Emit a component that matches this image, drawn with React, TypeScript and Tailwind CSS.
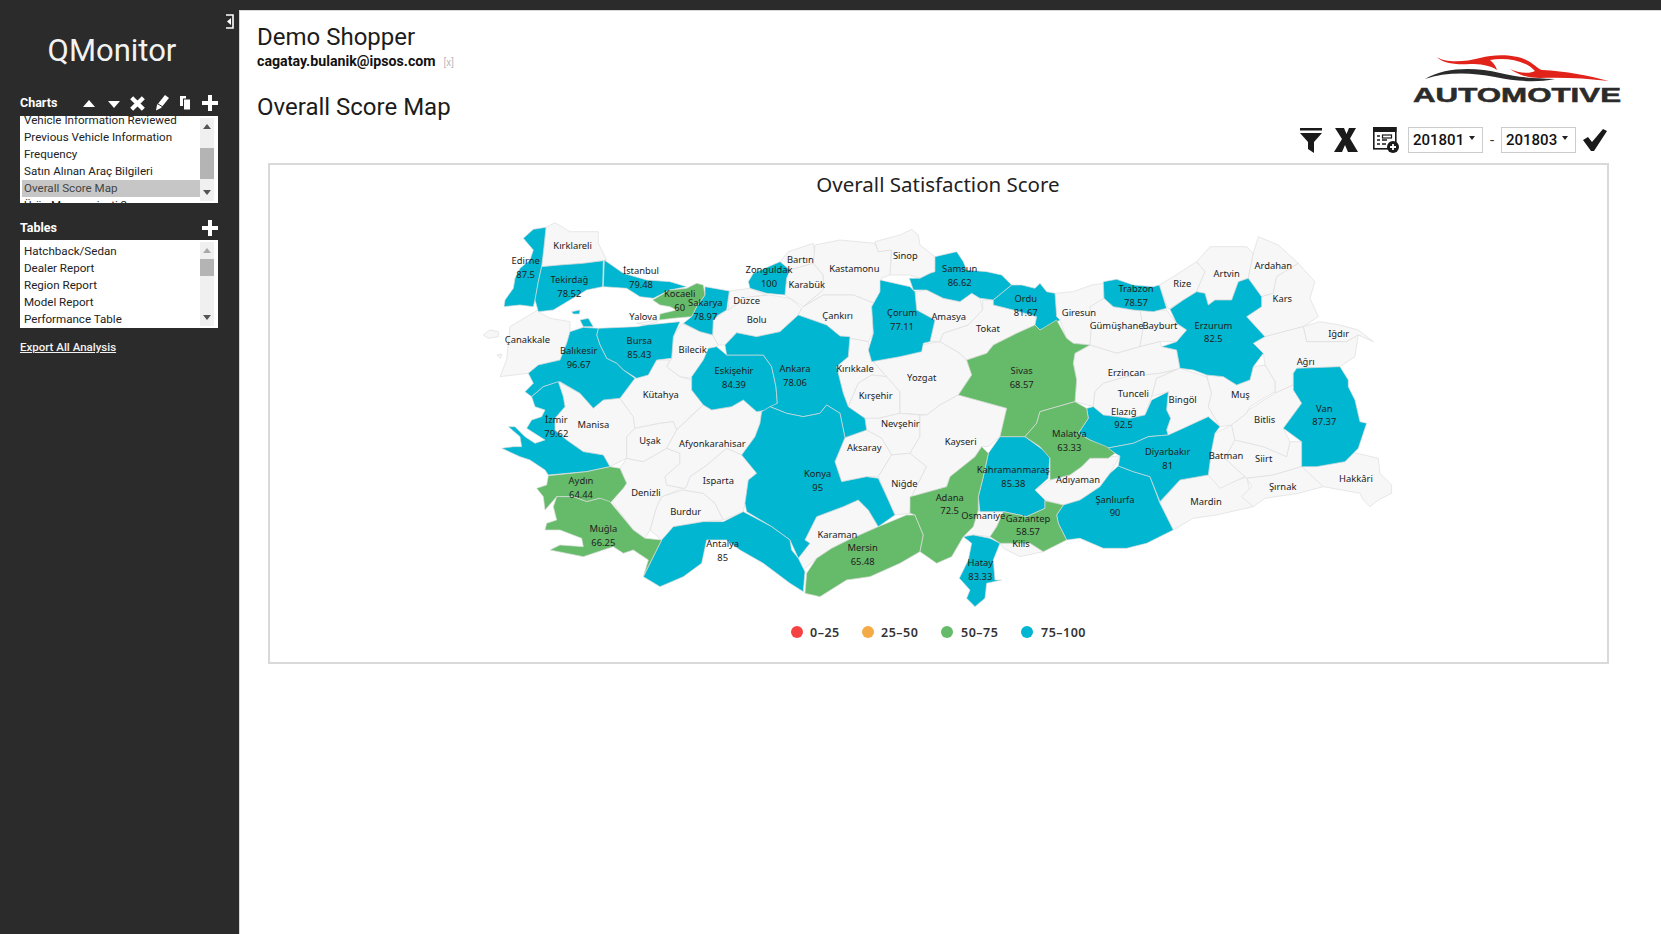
import React from "react";

const B = "#00b6d0";
const G = "#66bb6a";
const W = "#f7f7f7";

// province shapes, in the coordinates of two overlapping map sheets
const west: [string, string][] = [
  [W, "228,52 255,38 300,65 385,65 385,100 410,150 340,160 270,165 215,170 222,110"],
  [W, "120,350 195,305 225,285 205,305 240,325 300,335 300,365 290,400 270,450 205,465 175,490 90,500 110,450 115,400"],
  [W, "40,375 60,360 85,365 85,380 55,385"],
  [W, "80,435 95,432 92,445"],
  [W, "500,340 565,330 560,338 530,345"],
  [W, "265,515 330,550 370,595 400,570 450,565 490,620 495,655 470,680 470,745 420,770 400,735 340,725 290,690 255,660 255,625 285,590 280,560"],
  [W, "450,565 495,505 535,495 560,450 600,450 590,470 630,500 665,510 665,540 700,585 660,620 620,660 610,635 570,640 520,650 495,655 490,620"],
  [W, "635,340 690,365 728,375 745,405 700,450 665,505 630,500 590,470 605,445 610,380"],
  [W, "775,300 830,260 900,255 960,265 995,295 985,315 930,365 860,380 800,368 765,405 745,405 728,375 730,330 770,300"],
  [W, "778,243 840,235 890,255 830,262 775,300"],
  [W, "930,155 955,125 1030,100 1035,130 1030,160 960,180"],
  [W, "960,180 1030,160 1060,195 1060,240 1000,290 960,265 945,255 950,205"],
  [W, "1035,105 1110,90 1215,100 1225,125 1265,120 1260,195 1235,205 1230,240 1225,285 1150,255 1060,255 1000,290 1060,240 1060,195 1030,160"],
  [W, "1000,290 1060,255 1150,255 1225,285 1205,290 1210,370 1195,395 1140,385 1110,378 1070,345 985,315 995,295"],
  [W, "1140,385 1195,395 1210,455 1250,500 1205,495 1165,520 1135,590 1120,550 1100,470 1135,440"],
  [W, "1135,590 1165,520 1205,495 1250,500 1290,545 1290,610 1225,625 1185,625"],
  [W, "1210,455 1290,420 1350,405 1410,395 1470,430 1490,450 1505,495 1465,555 1410,585 1370,615 1290,610 1290,545 1250,500"],
  [W, "1225,625 1290,610 1350,615 1350,680 1320,730 1265,735 1235,685 1190,660 1185,625"],
  [W, "1125,683 1190,660 1235,685 1265,735 1225,800 1190,800 1115,815 1095,755"],
  [W, "1265,735 1320,730 1370,770 1325,860 1320,910 1275,915 1255,870 1225,800"],
  [W, "1350,615 1370,615 1410,585 1465,555 1610,595 1590,680 1555,710 1535,710 1515,740 1440,800 1430,830 1340,855 1320,910 1325,860 1370,770 1320,730 1350,680"],
  [W, "1005,990 1040,920 1120,890 1165,870 1195,900 1225,950 1135,990 1085,1015 1040,1045 1000,1080 985,1045 1020,1000"],
  [W, "575,860 640,840 700,850 735,880 760,930 700,935 610,950 575,990 540,960 560,890"],
  [W, "420,860 460,835 470,820 450,775 470,745 520,755 590,715 630,730 630,760 585,800 590,825 640,835 575,860 560,890 540,960 525,985 490,960 430,880"],
  [W, "470,680 495,655 570,640 610,635 620,660 590,715 520,755 470,745"],
  [W, "620,660 700,585 725,600 785,590 820,570 860,605 875,605 870,640 855,680 815,735 770,715 705,770 660,800 650,830 640,835 590,825 585,800 630,760 630,730 590,715"],
  [W, "650,830 660,800 705,770 770,715 815,735 860,790 835,810 825,880 820,905 760,930 735,880 700,850 640,840"],
  [B, "190,58 228,52 222,110 215,170 205,215 197,262 190,290 150,285 102,290 105,270 130,235 135,205 150,175 180,150 190,120 160,85"],
  [B, "215,170 270,165 340,160 400,152 398,230 350,240 300,270 250,300 205,305 195,270 205,215"],
  [B, "403,150 460,190 530,210 600,215 650,230 600,240 550,265 510,260 470,235 400,230"],
  [B, "705,230 778,243 770,300 745,315 730,330 728,375 690,365 640,340 665,320 680,290 705,255"],
  [B, "385,355 500,350 530,345 630,335 610,380 605,445 560,450 535,495 500,505 460,480 440,460 410,445 390,405 380,375"],
  [B, "300,365 340,352 385,355 380,375 390,405 410,445 440,460 460,480 495,505 450,565 400,570 370,595 330,550 270,515 220,530 185,560 165,545 190,520 175,490 205,465 270,450 290,400"],
  [B, "305,305 330,300 328,312 310,312"],
  [B, "330,330 355,325 370,350 340,350"],
  [B, "185,560 220,530 265,515 280,560 285,590 255,625 255,660 290,690 340,725 400,735 420,770 350,785 235,795 225,780 180,750 150,740 95,715 130,710 155,710 150,680 115,650 135,650 165,680 195,700 225,690 170,655 185,630 215,620 225,600 195,590"],
  [B, "715,415 740,410 770,435 880,435 905,470 918,530 922,580 895,600 860,605 820,570 785,590 725,600 700,585 665,540 665,500 700,450"],
  [B, "800,368 860,380 930,365 985,315 1070,345 1110,378 1140,380 1135,440 1100,470 1120,550 1135,590 1185,625 1190,660 1125,683 1110,610 1070,585 1050,610 1000,620 950,610 900,590 922,580 918,530 905,470 880,435 770,435 765,405"],
  [B, "850,190 930,155 960,180 950,205 945,255 890,250 840,235 835,215"],
  [B, "875,605 900,590 950,610 1000,620 1050,610 1070,585 1110,610 1125,683 1095,755 1115,815 1190,800 1225,805 1255,870 1275,915 1225,950 1195,900 1165,870 1120,890 1040,920 1005,990 1020,1000 985,1045 960,990 905,950 830,905 825,880 835,810 860,790 815,735 855,680 870,640"],
  [B, "610,950 700,935 760,935 820,905 905,950 960,990 965,1020 985,1045 1005,1085 1000,1145 960,1120 880,1060 810,1020 770,990 710,990 695,1060 640,1100 570,1130 520,1100 555,1030 575,990"],
  [G, "548,270 600,240 650,235 680,220 700,225 705,255 680,290 665,320 610,325 568,330 570,312 620,300 600,290 570,285"],
  [G, "235,797 350,785 420,770 450,775 470,820 460,835 420,880 390,865 350,875 310,860 260,860 225,900 220,860 200,835 230,825"],
  [G, "260,860 310,860 350,875 390,865 420,875 490,960 525,985 575,990 555,1030 520,1100 535,1050 490,1020 460,1030 430,1010 400,1020 340,1040 240,1020 270,1005 340,1010 335,985 270,960 225,960 230,940 260,930 250,890"],
  [G, "1225,950 1310,915 1335,915 1360,975 1350,1025 1290,1060 1200,1100 1130,1110 1050,1160 1005,1150 1010,1090 1040,1045 1085,1015 1135,990"],
];

const east: [string, string][] = [
  [W, "-75,95 0,75 35,58 55,75 60,105 105,140 105,185 90,190 60,205 30,195 -30,195 -25,120 -65,125"],
  [W, "45,245 80,240 130,265 180,275 215,250 240,265 248,300 205,345 130,370 120,395 90,395 105,330 50,300"],
  [W, "248,270 280,270 280,285 340,300 410,320 405,345 350,370 300,395 280,405 260,430 200,450 180,430 120,395 130,370 205,345 248,300"],
  [W, "465,250 520,245 575,225 610,220 612,265 575,290 575,345 570,405 520,400 500,385 480,330 470,320"],
  [W, "612,265 640,290 700,300 720,300 730,350 720,410 650,430 570,405 575,340 570,290"],
  [W, "720,300 800,300 830,340 860,360 830,395 780,395 720,410 730,350"],
  [W, "778,225 820,200 890,155 915,185 890,245 850,270 805,298"],
  [W, "890,155 930,110 1040,110 1060,130 1045,205 1015,215 995,270 945,270 925,285 915,250 890,245 915,185"],
  [W, "1060,130 1075,80 1135,105 1195,160 1130,200 1120,250 1085,260 1045,205"],
  [W, "1195,160 1245,215 1230,265 1255,320 1210,350 1095,380 1040,320 1085,290 1085,260 1120,250 1130,200"],
  [W, "1210,350 1260,335 1320,345 1375,360 1420,395 1375,375 1340,395 1220,395"],
  [W, "570,405 650,430 720,410 780,395 785,410 830,420 840,475 780,490 680,500 610,520 585,545 580,590 525,575 530,510 520,460 525,430"],
  [W, "585,545 610,520 680,500 780,490 830,480 770,505 755,560 735,615 690,625 610,615 580,590"],
  [W, "770,505 840,475 920,500 935,550 925,590 960,650 925,620 860,650 815,675 800,660 812,625 800,600 805,545 755,560"],
  [W, "450,810 510,795 545,770 570,745 660,738 630,790 600,830 540,870 490,885 435,870 405,840"],
  [W, "300,1000 390,1000 430,1025 360,1040 310,1015"],
  [W, "235,860 240,905 310,905 290,950 270,980 220,975 190,980 220,950 235,900"],
  [W, "780,880 840,810 925,795 960,830 1040,800 1060,890 950,915 880,925 820,960"],
  [W, "945,670 995,645 1005,690 975,745 1035,800 960,835 925,795 935,720"],
  [W, "1005,690 1090,710 1160,740 1170,695 1205,695 1205,770 1120,795 1040,805 975,745"],
  [W, "1040,805 1120,795 1205,770 1260,765 1270,830 1195,850 1095,865 1060,890 1025,860 1055,830"],
  [W, "1205,770 1265,765 1335,755 1350,725 1435,745 1440,790 1475,825 1475,850 1435,870 1410,890 1390,870 1380,850 1270,830"],
  [W, "1095,380 1210,350 1220,395 1340,395 1375,375 1365,440 1320,470 1190,475 1180,490 1180,525 1125,550 1125,515 1095,465 1090,430 1060,400"],
  [W, "920,495 970,500 1010,525 1050,510 1060,470 1095,465 1125,515 1125,545 1050,590 1040,610 995,645 960,650 925,590 935,550"],
  [W, "1045,600 1125,550 1180,525 1205,580 1150,655 1170,695 1160,740 1090,710 1005,690 995,645 1040,610"],
  [B, "-60,210 30,230 45,245 50,300 105,330 90,395 70,400 65,425 0,440 -85,455 -95,420 -80,370 -85,290 -60,245"],
  [B, "105,140 170,125 190,155 200,180 260,185 305,195 335,225 280,270 240,265 215,250 180,275 130,265 80,240 40,240 28,205 60,205 90,190 105,185"],
  [B, "335,225 365,225 405,235 420,220 440,245 465,250 470,320 480,330 440,355 420,360 405,345 410,320 340,300 280,285 280,270"],
  [B, "610,215 650,208 700,225 760,230 778,225 800,295 760,305 700,300 640,290 612,265"],
  [B, "810,298 850,270 890,245 915,250 925,285 945,270 995,270 1015,215 1045,205 1085,260 1085,290 1040,320 1095,380 1060,400 1090,430 1060,470 1050,510 1010,525 970,500 920,495 880,480 840,475 830,420 785,410 830,395 860,360 830,340"],
  [B, "560,595 580,590 610,615 690,625 735,615 755,570 805,545 800,600 812,625 800,660 805,675 745,680 700,700 620,715 570,690 535,670 565,625"],
  [B, "300,680 375,680 450,735 445,805 405,840 435,870 435,895 380,920 310,905 240,905 235,860 250,800 265,730"],
  [B, "190,980 220,975 270,985 300,1000 280,1050 285,1110 305,1110 260,1120 255,1165 225,1190 200,1165 210,1140 178,1105 205,1050 215,1000"],
  [B, "490,885 540,870 600,830 630,790 655,768 700,785 750,800 780,880 820,960 740,1000 680,1015 610,1015 540,985 500,990 475,940 470,915"],
  [B, "620,715 700,700 745,680 805,675 860,650 925,620 960,650 945,670 935,720 925,795 840,810 780,875 750,800 700,785 655,768 660,738 645,730"],
  [B, "1190,475 1320,470 1345,510 1345,530 1365,570 1380,635 1400,640 1375,715 1335,755 1250,770 1205,770 1205,695 1150,655 1205,580 1180,540 1180,490"],
  [G, "405,345 420,360 470,330 500,385 520,400 570,405 525,430 520,460 530,510 525,575 420,605 410,640 375,680 300,680 320,595 175,555 215,495 200,450 260,430 280,405 350,370"],
  [G, "525,575 560,595 565,625 535,670 570,690 620,710 645,730 625,745 570,745 545,770 510,795 450,810 450,745 420,710 375,680 410,640 420,605"],
  [G, "310,905 380,920 435,895 435,872 490,885 470,915 475,940 500,990 430,1025 390,1000 300,1000 270,980 290,950"],
  [G, "30,860 50,855 140,830 150,800 225,740 245,710 265,730 250,800 235,860 235,900 220,950 190,980 155,1040 110,1060 60,1025 70,975 45,915 30,910"],
];

// [name, value, x, y] in sheet coordinates
const westLabels: [string, string, number, number][] = [
  ["Kırklareli", "", 308, 118], ["Edirne", "87.5", 167, 163], ["Tekirdağ", "78.52", 298, 220],
  ["İstanbul", "79.48", 513, 193], ["Kocaeli", "60", 629, 261], ["Sakarya", "78.97", 706, 288],
  ["Yalova", "", 520, 331], ["Düzce", "", 830, 282], ["Bolu", "", 860, 338],
  ["Zonguldak", "100", 897, 190], ["Bartın", "", 991, 160], ["Karabük", "", 1010, 234],
  ["Kastamonu", "", 1153, 187], ["Sinop", "", 1306, 148], ["Çankırı", "", 1103, 326],
  ["Çorum", "77.11", 1296, 318], ["Çanakkale", "", 172, 400], ["Balıkesir", "96.67", 326, 433],
  ["Bursa", "85.43", 508, 403], ["Bilecik", "", 668, 430], ["Eskişehir", "84.39", 792, 493],
  ["Ankara", "78.06", 975, 487], ["Kırıkkale", "", 1155, 487], ["Kırşehir", "", 1217, 566],
  ["Yozgat", "", 1355, 513], ["Kütahya", "", 572, 563], ["Nevşehir", "", 1291, 650],
  ["Manisa", "", 370, 655], ["İzmir", "79.62", 259, 640], ["Uşak", "", 540, 702],
  ["Afyonkarahisar", "", 727, 712], ["Aksaray", "", 1183, 724], ["Konya", "95", 1043, 801],
  ["Niğde", "", 1303, 830], ["Aydın", "64.44", 333, 822], ["Isparta", "", 745, 822],
  ["Denizli", "", 528, 859], ["Burdur", "", 647, 916], ["Muğla", "66.25", 400, 967],
  ["Karaman", "", 1102, 985], ["Antalya", "85", 758, 1011], ["Mersin", "65.48", 1178, 1023],
];

const eastLabels: [string, string, number, number][] = [
  ["Samsun", "86.62", 179, 187], ["Amasya", "", 146, 330], ["Tokat", "", 264, 365],
  ["Ordu", "81.67", 377, 276], ["Giresun", "", 537, 318], ["Trabzon", "78.57", 708, 247],
  ["Rize", "", 847, 232], ["Artvin", "", 980, 202], ["Ardahan", "", 1120, 178],
  ["Kars", "", 1147, 276], ["Gümüşhane", "", 650, 356], ["Bayburt", "", 780, 356],
  ["Erzurum", "82.5", 940, 356], ["Iğdır", "", 1316, 380], ["Ağrı", "", 1217, 464],
  ["Sivas", "68.57", 365, 493], ["Erzincan", "", 679, 499], ["Tunceli", "", 700, 560],
  ["Bingöl", "", 848, 579], ["Muş", "", 1021, 564], ["Elazığ", "92.5", 671, 614],
  ["Bitlis", "", 1094, 640], ["Van", "87.37", 1273, 605], ["Malatya", "63.33", 508, 682],
  ["Kayseri", "", 182, 706], ["Diyarbakır", "81", 803, 736], ["Batman", "", 978, 748],
  ["Siirt", "", 1091, 757], ["Kahramanmaraş", "85.38", 340, 790], ["Adıyaman", "", 534, 819],
  ["Hakkâri", "", 1368, 815], ["Şırnak", "", 1148, 839], ["Adana", "72.5", 149, 872],
  ["Şanlıurfa", "90", 645, 878], ["Mardin", "", 918, 884], ["Osmaniye", "", 250, 926],
  ["Gaziantep", "58.57", 384, 935], ["Kilis", "", 363, 1011], ["Hatay", "83.33", 241, 1068],
];

const legend: [string, string, number, number][] = [
  ["#f54343", "0–25", 797, 810],
  ["#f4ab45", "25–50", 868, 881],
  ["#66bb6a", "50–75", 947, 961],
  ["#00b6d0", "75–100", 1027, 1041],
];

function Labels({ items, ox }: { items: [string, string, number, number][]; ox: number }) {
  return (
    <>
      {items.map(([name, value, x, y]) => (
        <text key={name} x={ox + x / 3} y={210 + y / 3} textAnchor="middle" fontSize="9.4" fill="#222">
          <tspan>{name}</tspan>
          {value ? (
            <tspan x={ox + x / 3} dy="13.7">
              {value}
            </tspan>
          ) : null}
        </text>
      ))}
    </>
  );
}

function TurkeyMap() {
  return (
    <svg viewBox="270 165 1337 497" className="w-full h-full block" style={{ fontFamily: '"Noto Sans", sans-serif' }}>
      <text x="938" y="191.5" textAnchor="middle" fontSize="20.5" fill="#222">
        Overall Satisfaction Score
      </text>
      <g transform="translate(470 210) scale(0.3333)" stroke="#dcdcdc" strokeWidth="2" strokeLinejoin="round">
        {west.map(([f, p], i) => (
          <polygon key={i} points={p} fill={f} />
        ))}
      </g>
      <g transform="translate(900 210) scale(0.3333)" stroke="#dcdcdc" strokeWidth="2" strokeLinejoin="round">
        {east.map(([f, p], i) => (
          <polygon key={i} points={p} fill={f} />
        ))}
      </g>
      <Labels items={westLabels} ox={470} />
      <Labels items={eastLabels} ox={900} />
      {legend.map(([c, t, cx, tx]) => (
        <g key={t}>
          <circle cx={cx} cy="632" r="6" fill={c} />
          <text x={tx} y="636.5" fontSize="12.5" fontWeight="600" fill="#333" letterSpacing="0.5">
            {t}
          </text>
        </g>
      ))}
    </svg>
  );
}

function Logo() {
  return (
    <svg viewBox="1405 48 222 60" className="w-[222px] h-[60px] block">
      <path
        d="M1437 57 C1445 63 1465 62 1480 58 C1498 53 1520 55 1530 62 C1535 65 1538 69 1542 70 C1565 71 1590 76 1609 81 C1585 78 1560 77 1540 78 C1530 78 1520 76 1510 69 C1518 73 1530 74 1535 71 C1525 60 1505 57 1490 60 C1494 63 1496 67 1497 70 C1490 65 1480 64 1470 64 C1455 65 1442 63 1437 57 Z"
        fill="#e2231a"
      />
      <path
        d="M1425 79 C1445 67 1475 67 1500 73 C1520 78 1535 78 1555 79 C1535 83 1515 81 1495 77 C1470 72 1445 72 1425 79 Z"
        fill="#2b2b2b"
      />
      <text
        x="1413"
        y="102"
        fontSize="20"
        fontWeight="700"
        fill="#2b2b2b"
        stroke="#2b2b2b"
        strokeWidth="0.5"
        textLength="208"
        lengthAdjust="spacingAndGlyphs"
        style={{ fontFamily: '"Liberation Sans", sans-serif' }}
      >
        AUTOMOTIVE
      </text>
    </svg>
  );
}

function Scrollbar({ thumbTop, thumbH, upDim }: { thumbTop: string; thumbH: string; upDim?: boolean }) {
  return (
    <div className="w-[14px] my-[2px] mr-[4px] bg-[#f0f0f0] flex flex-col items-center relative shrink-0">
      <svg viewBox="0 0 8 5" className="w-[8px] h-[5px] mt-[6px]">
        <polygon points="4,0 8,5 0,5" fill={upDim ? "#a8a8a8" : "#555"} />
      </svg>
      <div className={`absolute left-0 right-0 bg-[#b4b4b4] ${thumbTop} ${thumbH}`} />
      <svg viewBox="0 0 8 5" className="w-[8px] h-[5px] mt-auto mb-[6px]">
        <polygon points="0,0 8,0 4,5" fill="#555" />
      </svg>
    </div>
  );
}

function Row({ label, selected }: { label: string; selected?: boolean }) {
  return (
    <div className={`h-[17px] leading-[17px] pl-[2px] whitespace-nowrap ${selected ? "bg-[#c6c6c6] text-[#444]" : "text-[#222]"}`}>
      {label}
    </div>
  );
}

function Sidebar() {
  const rowText = "flex-1 text-[11.6px] pl-[2px] overflow-hidden";
  return (
    <aside className="w-[239px] shrink-0 bg-[#2b2b2b] text-white pl-[20px] pr-[21px] flex flex-col">
      <div className="flex justify-end -mr-[16px] pt-[4px] h-[19px]">
        <svg viewBox="0 0 8 15" className="w-[8px] h-[15px]">
          <path d="M0 1 H7 V14 H0" fill="none" stroke="#fff" strokeWidth="1.6" />
          <polygon points="1,7.5 5,4 5,11" fill="#fff" />
        </svg>
      </div>
      <div className="text-[31px] leading-[40px] mt-[2px] text-center text-[#f2f2f2] pr-[14px] whitespace-nowrap">QMonitor</div>

      <div className="flex items-center justify-between h-[20px] mt-[22px]">
        <span className="text-[12.5px] font-bold">Charts</span>
        <div className="flex items-center">
          <svg viewBox="0 0 12 7" className="w-[12px] h-[7px]">
            <polygon points="6,0 12,7 0,7" fill="#fff" />
          </svg>
          <svg viewBox="0 0 12 7" className="w-[12px] h-[7px] ml-[13px] mt-[3px]">
            <polygon points="0,0 12,0 6,7" fill="#fff" />
          </svg>
          <svg viewBox="0 0 16 16" className="w-[17px] h-[17px] ml-[9px]">
            <path d="M2.5 2.5 L13.5 13.5 M13.5 2.5 L2.5 13.5" stroke="#fff" strokeWidth="4" />
          </svg>
          <svg viewBox="0 0 14 16" className="w-[14px] h-[16px] ml-[9px]">
            <polygon points="10,0 14,3 6,13 1,15.5 2,10" fill="#fff" />
            <path d="M3 9 L8 12" stroke="#2b2b2b" strokeWidth="1" />
          </svg>
          <svg viewBox="0 0 11 14" className="w-[11px] h-[14px] ml-[11px]">
            <rect x="0" y="0" width="6" height="10" fill="#fff" />
            <rect x="3.5" y="3" width="7" height="11" fill="#fff" stroke="#2b2b2b" strokeWidth="1" />
          </svg>
          <svg viewBox="0 0 16 16" className="w-[16px] h-[16px] ml-[11px]">
            <path d="M8 0 V16 M0 8 H16" stroke="#fff" strokeWidth="4" />
          </svg>
        </div>
      </div>

      <div className="h-[87px] mt-[3px] bg-white flex overflow-hidden">
        <div className={rowText}>
          <div className="-mt-[4px]">
            <Row label="Vehicle Information Reviewed" />
            <Row label="Previous Vehicle Information" />
            <Row label="Frequency" />
            <Row label="Satın Alınan Araç Bilgileri" />
            <Row label="Overall Score Map" selected />
            <Row label="Ürün Memnuniyeti 2" />
          </div>
        </div>
        <Scrollbar thumbTop="top-[30px]" thumbH="h-[31px]" />
      </div>

      <div className="flex items-center justify-between h-[20px] mt-[15px]">
        <span className="text-[12.5px] font-bold">Tables</span>
        <svg viewBox="0 0 16 16" className="w-[16px] h-[16px]">
          <path d="M8 0 V16 M0 8 H16" stroke="#fff" strokeWidth="4" />
        </svg>
      </div>

      <div className="h-[88px] mt-[2px] bg-white flex overflow-hidden">
        <div className={rowText}>
          <div className="mt-[3px]">
            <Row label="Hatchback/Sedan" />
            <Row label="Dealer Report" />
            <Row label="Region Report" />
            <Row label="Model Report" />
            <Row label="Performance Table" />
          </div>
        </div>
        <Scrollbar thumbTop="top-[17px]" thumbH="h-[17px]" upDim />
      </div>

      <a className="text-[11.5px] font-medium underline mt-[11px] leading-[17px] text-[#f2f2f2]">Export All Analysis</a>
    </aside>
  );
}

function DateSelect({ value }: { value: string }) {
  return (
    <div className="w-[75px] h-[26px] border border-[#ccc] bg-white flex items-center pl-[4px]">
      <span className="text-[15px] font-medium text-[#111]">{value}</span>
      <svg viewBox="0 0 6 4" className="w-[6px] h-[4px] ml-auto mr-[7px] -mt-[5px]">
        <polygon points="0,0 6,0 3,4" fill="#222" />
      </svg>
    </div>
  );
}

function Toolbar() {
  return (
    <div className="flex items-center h-[26px] mr-[1px]">
      <svg viewBox="0 0 22 25" className="w-[22px] h-[25px]">
        <rect x="0" y="0" width="22" height="2.5" fill="#1a1a1a" />
        <polygon points="0,5 22,5 14,14 14,25 8,21 8,14" fill="#1a1a1a" />
      </svg>
      <svg viewBox="0 0 24 24" className="w-[24px] h-[24px] ml-[12px]">
        <polygon
          points="1,0 10,0 12.5,6 15,0 22,0 16,10.5 24,24 14,24 11,17 8,24 0,24 8,11"
          fill="#1a1a1a"
        />
      </svg>
      <svg viewBox="0 0 26 26" className="w-[26px] h-[26px] ml-[15px]">
        <rect x="0.8" y="0.8" width="22" height="21" fill="#fff" stroke="#1a1a1a" strokeWidth="1.6" />
        <rect x="0" y="0" width="23.5" height="5" fill="#1a1a1a" />
        <path d="M4 9 H7 M4 13 H7 M4 17 H7 M9 13 H14 M9 17 H13" stroke="#1a1a1a" strokeWidth="1.6" />
        <rect x="9.5" y="8" width="9" height="3" fill="none" stroke="#1a1a1a" strokeWidth="1.2" />
        <circle cx="20" cy="20" r="6" fill="#1a1a1a" />
        <path d="M20 17 V23 M17 20 H23" stroke="#fff" strokeWidth="1.8" />
      </svg>
      <div className="ml-[9px]">
        <DateSelect value="201801" />
      </div>
      <span className="w-[18px] text-center text-[15px] text-[#333]">-</span>
      <DateSelect value="201803" />
      <svg viewBox="0 0 24 22" className="w-[24px] h-[22px] ml-[7px]">
        <polygon points="0,11 5,8 9,13 20,0 24,2 11,22 8,22" fill="#1a1a1a" />
      </svg>
    </div>
  );
}

export default function App() {
  return (
    <div
      className="h-[934px] w-[1661px] overflow-hidden flex flex-col bg-white"
      style={{ fontFamily: 'Roboto, "Noto Sans", sans-serif' }}
    >
      <div className="h-[10px] shrink-0 bg-[#2b2b2b]" />
      <div className="flex flex-1 min-h-0">
        <Sidebar />
        <main className="flex-1 border-l border-t border-[#d8d8d8] pl-[17px] text-[#1c1c1c]">
          <div className="flex justify-between w-[1351px] h-[152px]">
            <div>
              <h1 className="text-[24px] leading-[32px] mt-[10px]">Demo Shopper</h1>
              <div className="flex items-baseline leading-[17px]">
                <span className="text-[14.2px] font-bold text-[#111]">cagatay.bulanik@ipsos.com</span>
                <span className="text-[10px] text-[#bbb] ml-[8px]">[x]</span>
              </div>
              <h2 className="text-[24px] leading-[32px] mt-[20px]">Overall Score Map</h2>
            </div>
            <div className="flex flex-col items-end">
              <div className="mt-[37px] -mr-[19px]">
                <Logo />
              </div>
              <div className="mt-[19px]">
                <Toolbar />
              </div>
            </div>
          </div>
          <div className="ml-[11px] w-[1341px] h-[501px] border-2 border-[#d9d9d9]">
            <TurkeyMap />
          </div>
        </main>
      </div>
    </div>
  );
}
